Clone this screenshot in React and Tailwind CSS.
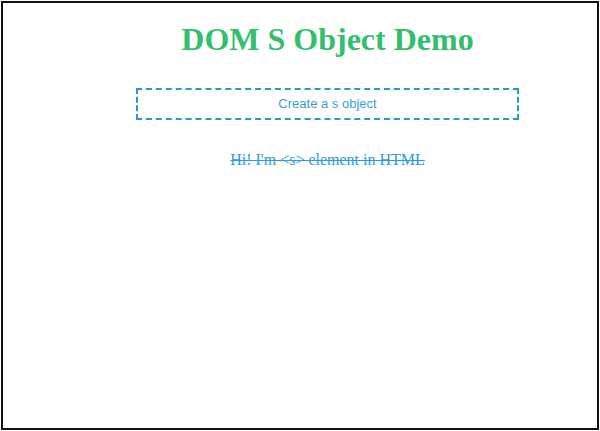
import React from 'react'

export default function App() {
  return (
    <div className="w-[600px] h-[431px] bg-white p-px">
      <div className="h-full border-2 border-[#111] bg-white">
        <div className="pl-[55px] flex flex-col items-center">
          <h1 className="mt-[18px] text-[32px] leading-[36px] font-bold text-[#33c06c]" style={{ fontFamily: '"Liberation Serif", serif' }}>
            DOM S Object Demo
          </h1>
          <button className="mt-[31px] w-[383px] h-[32px] border-2 border-dashed border-[#2a97cf] text-[13px] text-[#3a9fd2]" style={{ fontFamily: '"Liberation Sans", Arial, sans-serif' }}>
            Create a s object
          </button>
          <s className="mt-[30px] text-[16px] leading-[20px] text-[#2d9dd6]" style={{ fontFamily: '"Liberation Serif", serif' }}>
            Hi! I'm &lt;s&gt; element in HTML
          </s>
        </div>
      </div>
    </div>
  )
}
